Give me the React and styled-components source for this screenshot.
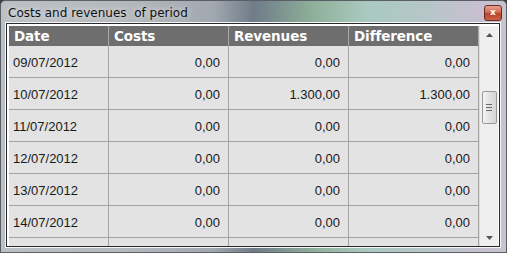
import React from 'react';
import styled, { createGlobalStyle } from 'styled-components';

const GlobalStyle = createGlobalStyle`
  html, body {
    margin: 0;
    padding: 0;
    background: #3a3d42;
    overflow: hidden;
  }
`

const Window = styled.div`
  width: 507px;
  height: 253px;
  box-sizing: border-box;
  display: flex;
  flex-direction: column;
  overflow: hidden;
  background: linear-gradient(90deg, #bcc0c5 0%, #b4b9be 25%, #a2a8b0 42%, #6f7c88 50%, #8fb09a 62%, #a9c9c0 72%, #b7c6c8 85%, #c8bfd0 95%, #c4c6cc 100%);
  border: 1px solid #5a5f66;
  border-radius: 5px 5px 0 0;
  font-family: Tahoma, "DejaVu Sans", "Liberation Sans", sans-serif;
`

const TitleBar = styled.div`
  height: 21px;
  flex: none;
  display: flex;
  align-items: center;
  justify-content: space-between;
  padding: 0 4px 0 7px;
`

const Title = styled.span`
  font-family: "DejaVu Sans", sans-serif;
  font-size: 12px;
  color: #111;
  padding-top: 3px;
  text-shadow: 0 0 6px rgba(255, 255, 255, 0.9);
`

const CloseButton = styled.div`
  width: 16px;
  height: 14px;
  margin-top: 2px;
  border-radius: 3px;
  border: 1px solid #6b2a1e;
  background: linear-gradient(#e8a290 0%, #d26a52 45%, #b8432b 55%, #c9634a 100%);
  color: #fff;
  font-family: "DejaVu Sans", sans-serif;
  font-size: 9px;
  font-weight: bold;
  display: flex;
  align-items: center;
  justify-content: center;
  line-height: 1;
`

const Client = styled.div`
  flex: 1;
  min-height: 0;
  margin: 0 5px 4px 4px;
  border: 1px solid #f4f6f8;
  display: flex;
`

const ClientInner = styled.div`
  flex: 1;
  min-height: 0;
  border: 1px solid #2a2a2a;
  background: #fff;
  padding: 2px 1px 0 2px;
  display: flex;
  overflow: hidden;
`

const Grid = styled.div`
  flex: 1;
  background: #e3e3e3;
  overflow: hidden;
`

const Row = styled.div`
  display: grid;
  grid-template-columns: 100px 120px 120px 130px;
  height: ${({ header }) => (header ? '20px' : '32px')};
  background: ${({ header }) => (header ? '#6e6e6e' : '#e3e3e3')};
`

const Cell = styled.div`
  box-sizing: border-box;
  display: flex;
  align-items: center;
  justify-content: ${({ right }) => (right ? 'flex-end' : 'flex-start')};
  padding: ${({ right }) => (right ? '1px 8px 0 0' : '1px 0 0 4px')};
  border-right: 1px solid #a4a4a4;
  border-bottom: 1px solid #a4a4a4;
  font-family: "Liberation Sans", Arial, sans-serif;
  font-size: 13px;
  color: #1a1a1a;
`

const HeadCell = styled(Cell)`
  font-family: "DejaVu Sans", Tahoma, sans-serif;
  font-weight: bold;
  font-size: 13.5px;
  letter-spacing: -0.1px;
  color: #fff;
  padding: 1px 0 0 5px;
  border-right: 1px solid #a8a8a8;
  border-bottom: 1px solid #6e6e6e;
`

const ScrollBar = styled.div`
  width: 18px;
  background: #efefef;
  border-left: 1px solid #dcdcdc;
  display: flex;
  flex-direction: column;
  align-items: center;
`

const Arrow = styled.div`
  height: 17px;
  width: 100%;
  display: flex;
  align-items: center;
  justify-content: center;
`

const Track = styled.div`
  flex: 1;
  width: 100%;
  padding-top: 48px;
  box-sizing: border-box;
  display: flex;
  justify-content: center;
`

const Thumb = styled.div`
  width: 15px;
  height: 33px;
  box-sizing: border-box;
  border: 1px solid #9a9a9a;
  border-radius: 2px;
  background: linear-gradient(90deg, #f4f4f4, #e2e2e2 50%, #d6d6d6);
  display: flex;
  flex-direction: column;
  align-items: center;
  justify-content: center;
  gap: 2px;
`

const Grip = styled.div`
  width: 6px;
  height: 1px;
  background: #6a6a6a;
`

const rows = [
  ['09/07/2012', '0,00', '0,00', '0,00'],
  ['10/07/2012', '0,00', '1.300,00', '1.300,00'],
  ['11/07/2012', '0,00', '0,00', '0,00'],
  ['12/07/2012', '0,00', '0,00', '0,00'],
  ['13/07/2012', '0,00', '0,00', '0,00'],
  ['14/07/2012', '0,00', '0,00', '0,00'],
  ['', '', '', ''],
]

const App = () => {
  return (
    <>
      <GlobalStyle />
      <Window>
        <TitleBar>
          <Title>Costs and revenues&nbsp; of period</Title>
          <CloseButton>x</CloseButton>
        </TitleBar>
        <Client>
          <ClientInner>
            <Grid>
              <Row header>
                <HeadCell>Date</HeadCell>
                <HeadCell>Costs</HeadCell>
                <HeadCell>Revenues</HeadCell>
                <HeadCell>Difference</HeadCell>
              </Row>
              {rows.map((r, i) => (
                <Row key={i}>
                  <Cell>{r[0]}</Cell>
                  <Cell right>{r[1]}</Cell>
                  <Cell right>{r[2]}</Cell>
                  <Cell right>{r[3]}</Cell>
                </Row>
              ))}
            </Grid>
            <ScrollBar>
              <Arrow>
                <svg width="7" height="4" viewBox="0 0 7 4">
                  <path d="M0 4 L3.5 0 L7 4 Z" fill="#555" />
                </svg>
              </Arrow>
              <Track>
                <Thumb>
                  <Grip />
                  <Grip />
                  <Grip />
                </Thumb>
              </Track>
              <Arrow>
                <svg width="7" height="4" viewBox="0 0 7 4">
                  <path d="M0 0 L7 0 L3.5 4 Z" fill="#555" />
                </svg>
              </Arrow>
            </ScrollBar>
          </ClientInner>
        </Client>
      </Window>
    </>
  );
};

export default App;
